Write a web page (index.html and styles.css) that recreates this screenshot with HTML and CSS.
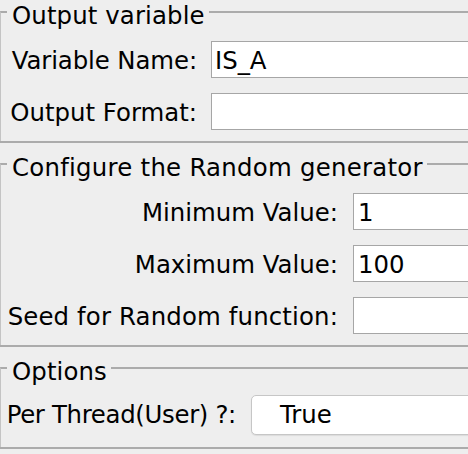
FILE: index.html
```html
<!DOCTYPE html>
<html>
<head>
<meta charset="utf-8">
<link rel="stylesheet" href="styles.css">
</head>
<body>
<div class="form">
  <section class="panel">
    <div class="legend"><span class="legend-text">Output variable</span></div>
    <div class="rows rows-output">
      <span class="lbl lbl-narrow">Variable Name:</span><div class="field">IS_A</div>
      <span class="lbl">Output Format:</span><div class="field"></div>
    </div>
  </section>
  <section class="panel">
    <div class="legend"><span class="legend-text legend-wide">Configure the Random generator</span></div>
    <div class="rows rows-random">
      <span class="lbl">Minimum Value:</span><div class="field field-num">1</div>
      <span class="lbl">Maximum Value:</span><div class="field field-num">100</div>
      <span class="lbl lbl-wide">Seed for Random function:</span><div class="field field-num"></div>
    </div>
  </section>
  <section class="panel">
    <div class="legend"><span class="legend-text">Options</span></div>
    <div class="rows rows-options">
      <span class="lbl lbl-combo">Per Thread(User) ?:</span><div class="combo">True</div>
    </div>
  </section>
</div>
</body>
</html>
```
FILE: styles.css
```css
html, body {
  margin: 0;
  padding: 0;
}
body {
  width: 468px;
  height: 454px;
  overflow: hidden;
  background: #eeeeee;
  color: #000;
  font-family: "DejaVu Sans", "Noto Sans", sans-serif;
  font-size: 24.4px;
}
.form {
  width: 476px;
}
.panel {
  padding-top: 9px;
  border-bottom: 2px solid #ababab;
}
.panel:first-child {
  padding-top: 0;
}
.legend {
  display: flex;
  align-items: flex-start;
  height: 30px;
}
.legend::before {
  content: "";
  flex: none;
  width: 7px;
  height: 19px;
  margin-top: 11px;
  border-top: 2px solid #ababab;
  border-left: 1px solid #c4c4c4;
  box-sizing: border-box;
}
.legend::after {
  content: "";
  flex: 1;
  height: 2px;
  margin-top: 11px;
  background: #ababab;
}
.legend-text {
  padding: 0 4px 0 5px;
  line-height: 32px;
  white-space: nowrap;
  letter-spacing: 0.12px;
}
.legend-wide {
  letter-spacing: 0.26px;
}
.rows {
  display: grid;
  row-gap: 15px;
  padding: 11px 0 11px 7px;
  border-left: 1px solid #c4c4c4;
}
.rows-output {
  grid-template-columns: 189px 1fr;
  column-gap: 14px;
}
.rows-random {
  grid-template-columns: 330px 1fr;
  column-gap: 15px;
}
.rows-options {
  grid-template-columns: 228px 1fr;
  column-gap: 15px;
  padding-top: 9px;
  padding-bottom: 12px;
}
.lbl {
  justify-self: end;
  white-space: nowrap;
  height: 37px;
  box-sizing: border-box;
  padding-top: 3px;
  line-height: 34px;
}
.lbl-narrow {
  letter-spacing: -0.1px;
}
.lbl-wide {
  letter-spacing: 0.15px;
}
.lbl-combo {
  height: 40px;
  padding-top: 0;
  line-height: 40px;
  letter-spacing: -0.32px;
}
.field {
  height: 37px;
  box-sizing: border-box;
  border: 1px solid #a6a6a6;
  background: #ffffff;
  padding: 2px 3px 0;
  line-height: 33px;
  white-space: nowrap;
}
.field-num {
  padding-left: 4px;
}
.combo {
  height: 40px;
  box-sizing: border-box;
  border: 1px solid #c6c6c6;
  border-radius: 5px;
  background: #ffffff;
  box-shadow: 0 1px 1px rgba(0, 0, 0, 0.08);
  padding-left: 28px;
  line-height: 38px;
}
```
